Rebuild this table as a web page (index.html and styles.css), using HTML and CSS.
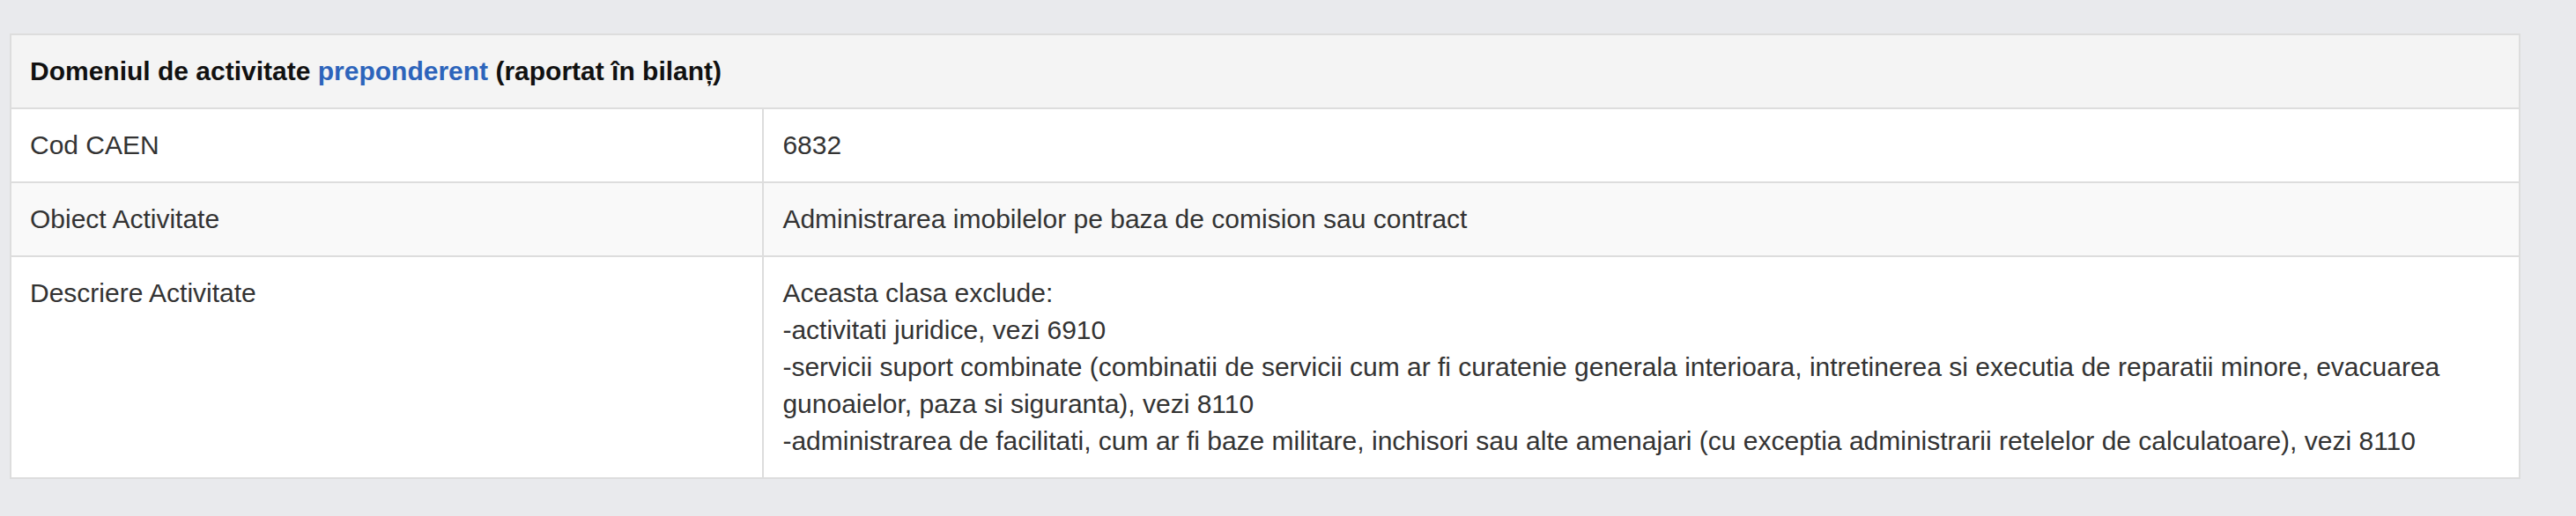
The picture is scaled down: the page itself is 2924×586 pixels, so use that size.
FILE: index.html
```html
<!DOCTYPE html>
<html lang="ro">
<head>
<meta charset="utf-8">
<title>Domeniul de activitate</title>
<link rel="stylesheet" href="styles.css">
</head>
<body>
<div class="panel">
  <table class="info-table">
    <thead>
      <tr>
        <th colspan="2" class="table-title">Domeniul de activitate <a href="#" class="link">preponderent</a> (raportat în bilanț)</th>
      </tr>
    </thead>
    <tbody>
      <tr>
        <td class="label">Cod CAEN</td>
        <td class="value">6832</td>
      </tr>
      <tr class="striped">
        <td class="label">Obiect Activitate</td>
        <td class="value">Administrarea imobilelor pe baza de comision sau contract</td>
      </tr>
      <tr>
        <td class="label">Descriere Activitate</td>
        <td class="value">Aceasta clasa exclude:<br>-activitati juridice, vezi 6910<br>-servicii suport combinate (combinatii de servicii cum ar fi curatenie generala interioara, intretinerea si executia de reparatii minore, evacuarea gunoaielor, paza si siguranta), vezi 8110<br>-administrarea de facilitati, cum ar fi baze militare, inchisori sau alte amenajari (cu exceptia administrarii retelelor de calculatoare), vezi 8110</td>
      </tr>
    </tbody>
  </table>
</div>
</body>
</html>
```
FILE: styles.css
```css
html, body {
  margin: 0;
  padding: 0;
  background: #e9eaed;
}

body {
  padding: 38px 63px 0 11px;
  font-family: "Liberation Sans", Arial, Helvetica, sans-serif;
  font-size: 30px;
  line-height: 42px;
  color: #333333;
}

.panel {
  width: 100%;
}

.info-table {
  width: 100%;
  border-collapse: collapse;
  border: 2px solid #dddddd;
  background: #ffffff;
}

.info-table th,
.info-table td {
  border: 2px solid #dddddd;
  padding: 20px 21px;
  text-align: left;
  vertical-align: top;
}

.table-title {
  background: #f4f4f4;
  font-weight: bold;
  color: #111111;
}

.link {
  color: #2d64bb;
  text-decoration: none;
}

.label {
  width: 30%;
}

.striped td {
  background: #f9f9f9;
}
```
